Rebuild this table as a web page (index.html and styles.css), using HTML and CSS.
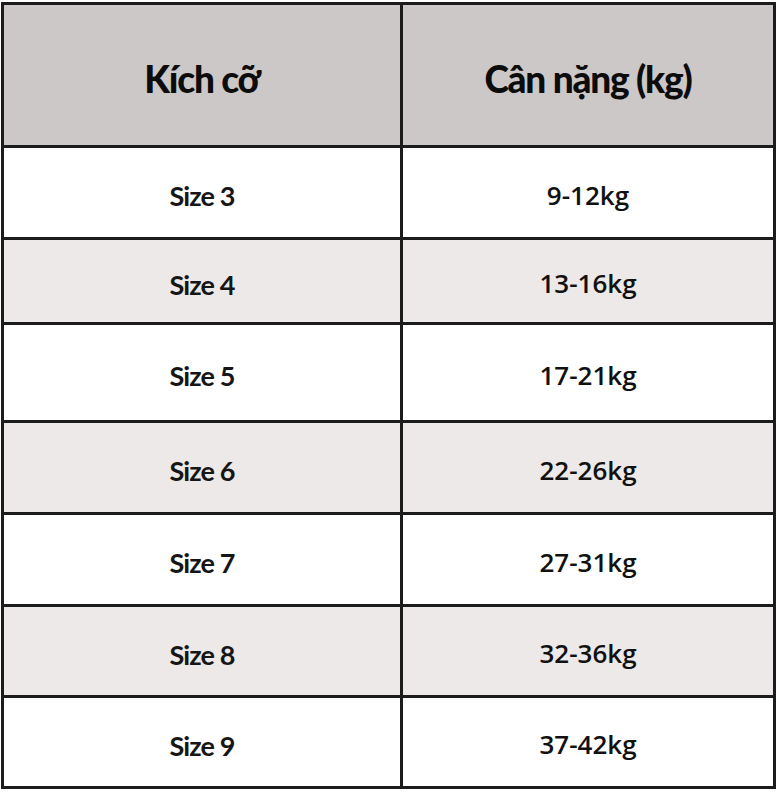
FILE: index.html
```html
<!DOCTYPE html>
<html lang="vi">
<head>
<meta charset="utf-8">
<title>Bảng kích cỡ</title>
<link rel="stylesheet" href="styles.css">
</head>
<body>
<div class="table">
  <div class="cell head">Kích cỡ</div>
  <div class="cell head">Cân nặng (kg)</div>
  <div class="cell size">Size 3</div>
  <div class="cell kg">9-12kg</div>
  <div class="cell size alt">Size 4</div>
  <div class="cell kg alt">13-16kg</div>
  <div class="cell size">Size 5</div>
  <div class="cell kg">17-21kg</div>
  <div class="cell size alt">Size 6</div>
  <div class="cell kg alt">22-26kg</div>
  <div class="cell size">Size 7</div>
  <div class="cell kg">27-31kg</div>
  <div class="cell size alt">Size 8</div>
  <div class="cell kg alt">32-36kg</div>
  <div class="cell size">Size 9</div>
  <div class="cell kg">37-42kg</div>
</div>
</body>
</html>
```

FILE: styles.css
```css
html, body {
  margin: 0;
  padding: 0;
  background: #ffffff;
}
.table {
  margin: 2px 0 0 1px;
  width: 769px;
  display: grid;
  grid-template-columns: 396px 370px;
  grid-template-rows: 140px 89px 82px 95px 89px 89px 88px 88px;
  gap: 3px;
  border: 3px solid #1c1c1c;
  background: #1c1c1c;
}
.cell {
  display: flex;
  align-items: center;
  justify-content: center;
  background: #ffffff;
  color: #111111;
}
.cell.alt {
  background: #ece9e8;
}
.head {
  background: #ccc8c8;
  font-family: Lato, "Noto Sans", sans-serif;
  font-weight: 900;
  font-size: 37px;
  letter-spacing: -1.2px;
  padding-top: 6px;
  color: #0c0c0c;
}
.size {
  font-family: Lato, "Noto Sans", sans-serif;
  font-weight: 700;
  font-size: 27px;
  letter-spacing: -0.9px;
  padding-top: 6px;
  color: #161616;
}
.kg {
  font-family: "Open Sans", "Noto Sans", sans-serif;
  font-weight: 600;
  font-size: 26px;
  padding-top: 4px;
}
```
